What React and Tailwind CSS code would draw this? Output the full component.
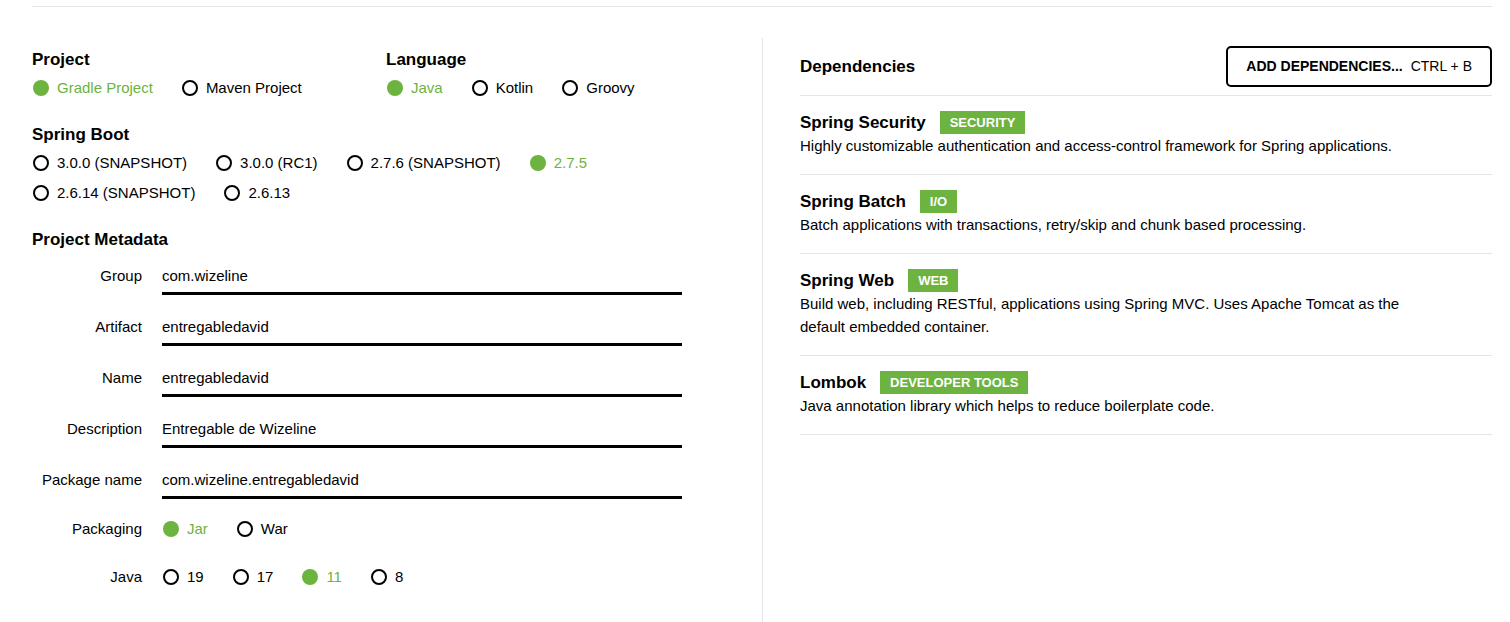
import React from 'react';

const Radio = ({ label, checked, last }) => (
  <div className={`flex items-center h-6 ${last ? '' : 'mr-[29px]'}`}>
    {checked ? (
      <span className="w-4 h-4 rounded-full bg-[#6db33f] shrink-0" />
    ) : (
      <span className="w-4 h-4 rounded-full border-2 border-black shrink-0" />
    )}
    <span className={`ml-2 text-[15px] leading-6 ${checked ? 'text-[#6db33f]' : 'text-black'}`}>{label}</span>
  </div>
);

const Field = ({ label, value }) => (
  <div className="flex items-start">
    <div className="w-[110px] text-right text-[15px] leading-6">{label}</div>
    <div className="ml-5 w-[520px] text-[15px] leading-6 pb-1 border-b-[3px] border-black">{value}</div>
  </div>
);

const deps = [
  {
    name: 'Spring Security',
    tag: 'SECURITY',
    desc: 'Highly customizable authentication and access-control framework for Spring applications.'
  },
  {
    name: 'Spring Batch',
    tag: 'I/O',
    desc: 'Batch applications with transactions, retry/skip and chunk based processing.'
  },
  {
    name: 'Spring Web',
    tag: 'WEB',
    desc: 'Build web, including RESTful, applications using Spring MVC. Uses Apache Tomcat as the default embedded container.'
  },
  {
    name: 'Lombok',
    tag: 'DEVELOPER TOOLS',
    desc: 'Java annotation library which helps to reduce boilerplate code.'
  }
];

const App = () => {
  return (
    <div className="w-[1510px] h-[622px] overflow-hidden bg-white text-black font-['Liberation_Sans',Arial,sans-serif]">
      <div className="ml-8 w-[1460px] h-full flex flex-col">
        {/* top rule */}
        <div className="mt-[6px] h-px bg-[#e1e7e8]" />

        <div className="mt-[31px] flex flex-1">
          {/* left column */}
          <div className="w-[730px] pt-[10px]">
            <div className="flex">
              <div className="w-[354px]">
                <h2 className="text-[17px] leading-6 font-bold">Project</h2>
                <div className="mt-1 flex pl-px">
                  <Radio label="Gradle Project" checked />
                  <Radio label="Maven Project" last />
                </div>
              </div>
              <div>
                <h2 className="text-[17px] leading-6 font-bold">Language</h2>
                <div className="mt-1 flex pl-px">
                  <Radio label="Java" checked />
                  <Radio label="Kotlin" />
                  <Radio label="Groovy" last />
                </div>
              </div>
            </div>

            <h2 className="mt-[23px] text-[17px] leading-6 font-bold">Spring Boot</h2>
            <div className="mt-1 flex pl-px">
              <Radio label="3.0.0 (SNAPSHOT)" />
              <Radio label="3.0.0 (RC1)" />
              <Radio label="2.7.6 (SNAPSHOT)" />
              <Radio label="2.7.5" checked last />
            </div>
            <div className="mt-[6px] flex pl-px">
              <Radio label="2.6.14 (SNAPSHOT)" />
              <Radio label="2.6.13" last />
            </div>

            <h2 className="mt-[23px] text-[17px] leading-6 font-bold">Project Metadata</h2>
            <div className="mt-3 flex flex-col gap-5">
              <Field label="Group" value="com.wizeline" />
              <Field label="Artifact" value="entregabledavid" />
              <Field label="Name" value="entregabledavid" />
              <Field label="Description" value="Entregable de Wizeline" />
              <Field label="Package name" value="com.wizeline.entregabledavid" />
            </div>

            <div className="mt-[18px] flex items-center">
              <div className="w-[110px] text-right text-[15px] leading-6">Packaging</div>
              <div className="ml-5 flex pl-px">
                <Radio label="Jar" checked />
                <Radio label="War" last />
              </div>
            </div>
            <div className="mt-6 flex items-center">
              <div className="w-[110px] text-right text-[15px] leading-6">Java</div>
              <div className="ml-5 flex pl-px">
                <Radio label="19" />
                <Radio label="17" />
                <Radio label="11" checked />
                <Radio label="8" last />
              </div>
            </div>
          </div>

          {/* right column */}
          <div className="w-[730px] border-l border-[#e1e7e8] pl-[37px]">
            <div className="h-[58px] flex items-center justify-between border-b border-[#e1e7e8]">
              <h2 className="text-[17px] font-bold leading-6">Dependencies</h2>
              <button className="h-[41px] px-[18px] flex items-center border-2 border-black rounded-[5px] bg-white">
                <span className="text-[14px] font-bold">ADD DEPENDENCIES...</span>
                <span className="ml-2 text-[14px]">CTRL + B</span>
              </button>
            </div>
            {deps.map((d) => (
              <div key={d.name} className="pt-[15px] pb-[17px] border-b border-[#e1e7e8]">
                <div className="flex items-center h-[23px]">
                  <span className="text-[17px] font-bold">{d.name}</span>
                  <span className="ml-[14px] h-[23px] px-[10px] flex items-center bg-[#6db33f] text-white text-[13px] font-bold">
                    {d.tag}
                  </span>
                </div>
                <p className="max-w-[620px] text-[15px] leading-[23px]">{d.desc}</p>
              </div>
            ))}
          </div>
        </div>
      </div>
    </div>
  );
};

export default App;
